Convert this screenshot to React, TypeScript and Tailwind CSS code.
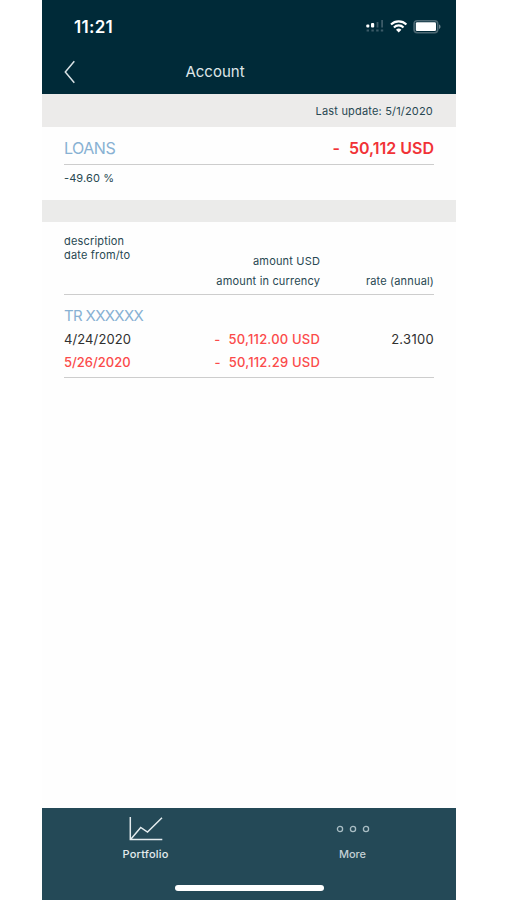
function StatusIcons() {
  return (
    <svg width="76" height="18" viewBox="0 0 76 18" fill="none">
      <g fill="#fff">
        <rect x="1.3" y="6.5" width="3" height="3" rx="1" />
        <rect x="6" y="5" width="3.2" height="4.5" rx="1" />
      </g>
      <g fill="#3c5b68">
        <rect x="11.6" y="4" width="1.8" height="5.5" />
        <rect x="16.2" y="2" width="1.8" height="7.5" />
        <rect x="1.6" y="11.5" width="2.4" height="2" />
        <rect x="6.4" y="11.5" width="2.4" height="2" />
        <rect x="11.2" y="11.5" width="2.4" height="2" />
        <rect x="15.8" y="11.5" width="2.4" height="2" />
      </g>
      <path d="M26 6.5a11 11 0 0 1 15.4 0M28.900 9.400a6.800 6.800 0 0 1 9.600 0" stroke="#fff" strokeWidth="2.1" />
      <path d="M31 11.700a4 4 0 0 1 5.400 0L33.700 14.500z" fill="#fff" />
      <rect x="49.1" y="2.7" width="23.6" height="12" rx="3.2" stroke="#4d6974" strokeWidth="1.6" />
      <rect x="50.8" y="4.3" width="20.2" height="8.8" rx="1.3" fill="#fff" />
      <path d="M74 6.5v4.400c1-.4 1.500-1.200 1.500-2.200S75 6.900 74 6.500z" fill="#6c848d" />
    </svg>
  );
}

function ChartIcon() {
  return (
    <svg width="34" height="26" viewBox="0 0 34 26" fill="none" stroke="#e3ebee" strokeWidth="1.5">
      <path d="M1.300 1v22.600h32" />
      <path d="M2 23L11.700 11.500l6.800 4.600L33 1.800" />
    </svg>
  );
}

function Amount({ value }: { value: string }) {
  return (
    <span className="flex gap-[8px] font-medium tracking-[0.2px] text-[#fb4a4a]">
      <span>-</span>
      <span>{value}</span>
    </span>
  );
}

export default function App() {
  return (
    <div className="flex h-[900px] w-[507px] justify-center bg-white pr-[9px] font-['Inter',sans-serif] text-[#284852]">
      <div className="flex h-full w-[414px] flex-col bg-[#fefefe]">
        <header className="h-[94px] bg-[#002a38] text-white">
          <div className="flex h-[50px] items-center justify-between pt-[4px] pr-[15px] pl-[32px]">
            <span className="pt-[1px] text-[17px] font-semibold tracking-[0.3px]">11:21</span>
            <StatusIcons />
          </div>
          <div className="grid h-[44px] grid-cols-[1fr_auto_1fr] items-center pr-[68px]">
            <svg className="ml-[22px]" width="12" height="24" viewBox="0 0 12 24" fill="none" stroke="#d9e2e5" strokeWidth="1.5">
              <path d="M10.300 1.300L1.300 12l9 10.700" />
            </svg>
            <h1 className="text-[15px] text-[#dfe6e8]">Account</h1>
          </div>
        </header>

        <div className="flex h-[33px] items-center justify-end bg-[#ecebea] pt-[1px] pr-[23px] text-[11px] tracking-[0.18px]">
          Last update: 5/1/2020
        </div>

        <section className="h-[73px] px-[22px]">
          <div className="flex h-[38px] items-center justify-between border-b border-[#cdcdcd] pt-[4px] text-[16px]">
            <h2 className="tracking-[-0.5px] text-[#88b1d3]">LOANS</h2>
            <span className="flex gap-[9px] font-semibold text-[#f13236]">
              <span>-</span>
              <span>50,112 USD</span>
            </span>
          </div>
          <p className="pt-[5px] text-[11px] leading-[17px] tracking-[0.1px]">-49.60 %</p>
        </section>

        <div className="h-[22px] bg-[#ebebea]" />

        <section className="px-[22px]">
          <div className="grid h-[73px] grid-cols-[110px_146px_1fr] border-b border-[#cdcdcd] text-[11px] tracking-[0.17px]">
            <div className="pt-[12px] leading-[14px]">
              <p>description</p>
              <p>date from/to</p>
            </div>
            <div className="pt-[29px] text-right leading-[20px]">
              <p>amount USD</p>
              <p>amount in currency</p>
            </div>
            <p className="pt-[49px] text-right leading-[20px]">rate (annual)</p>
          </div>
          <div className="h-[83px] border-b border-[#cdcdcd] pt-[9px] text-[13px]">
            <h3 className="text-[15px] leading-[24px] tracking-[-0.65px] text-[#88b1d3]">TR XXXXXX</h3>
            <div className="grid h-[23px] grid-cols-[110px_146px_1fr] items-center">
              <span className="tracking-[0.1px] text-[#303030]">4/24/2020</span>
              <span className="flex justify-end">
                <Amount value="50,112.00 USD" />
              </span>
              <span className="text-right tracking-[0.3px] text-[#303030]">2.3100</span>
            </div>
            <div className="grid h-[23px] grid-cols-[110px_146px_1fr] items-center">
              <span className="font-medium text-[#fb4a4a]">5/26/2020</span>
              <span className="flex justify-end">
                <Amount value="50,112.29 USD" />
              </span>
            </div>
          </div>
        </section>

        <nav className="mt-auto flex h-[92px] flex-col items-center bg-[#244957] text-[11px] text-[#e3ebee]">
          <div className="grid h-[76px] w-full grid-cols-2">
            <div className="flex flex-col items-center pt-[8px]">
              <ChartIcon />
              <span className="mt-[4px] leading-[16px] font-medium tracking-[0.2px]">Portfolio</span>
            </div>
            <div className="flex flex-col items-center pt-[17px] text-[#c3d0d5]">
              <svg width="34" height="8" viewBox="0 0 34 8" fill="none" stroke="#a9bdc4" strokeWidth="1.3">
                <circle cx="4" cy="4" r="2.6" />
                <circle cx="17" cy="4" r="2.6" />
                <circle cx="30" cy="4" r="2.6" />
              </svg>
              <span className="mt-[13px] leading-[16px] font-medium">More</span>
            </div>
          </div>
          <div className="mt-[1px] h-[6px] w-[149px] rounded-full bg-white" />
        </nav>
      </div>
    </div>
  );
}
